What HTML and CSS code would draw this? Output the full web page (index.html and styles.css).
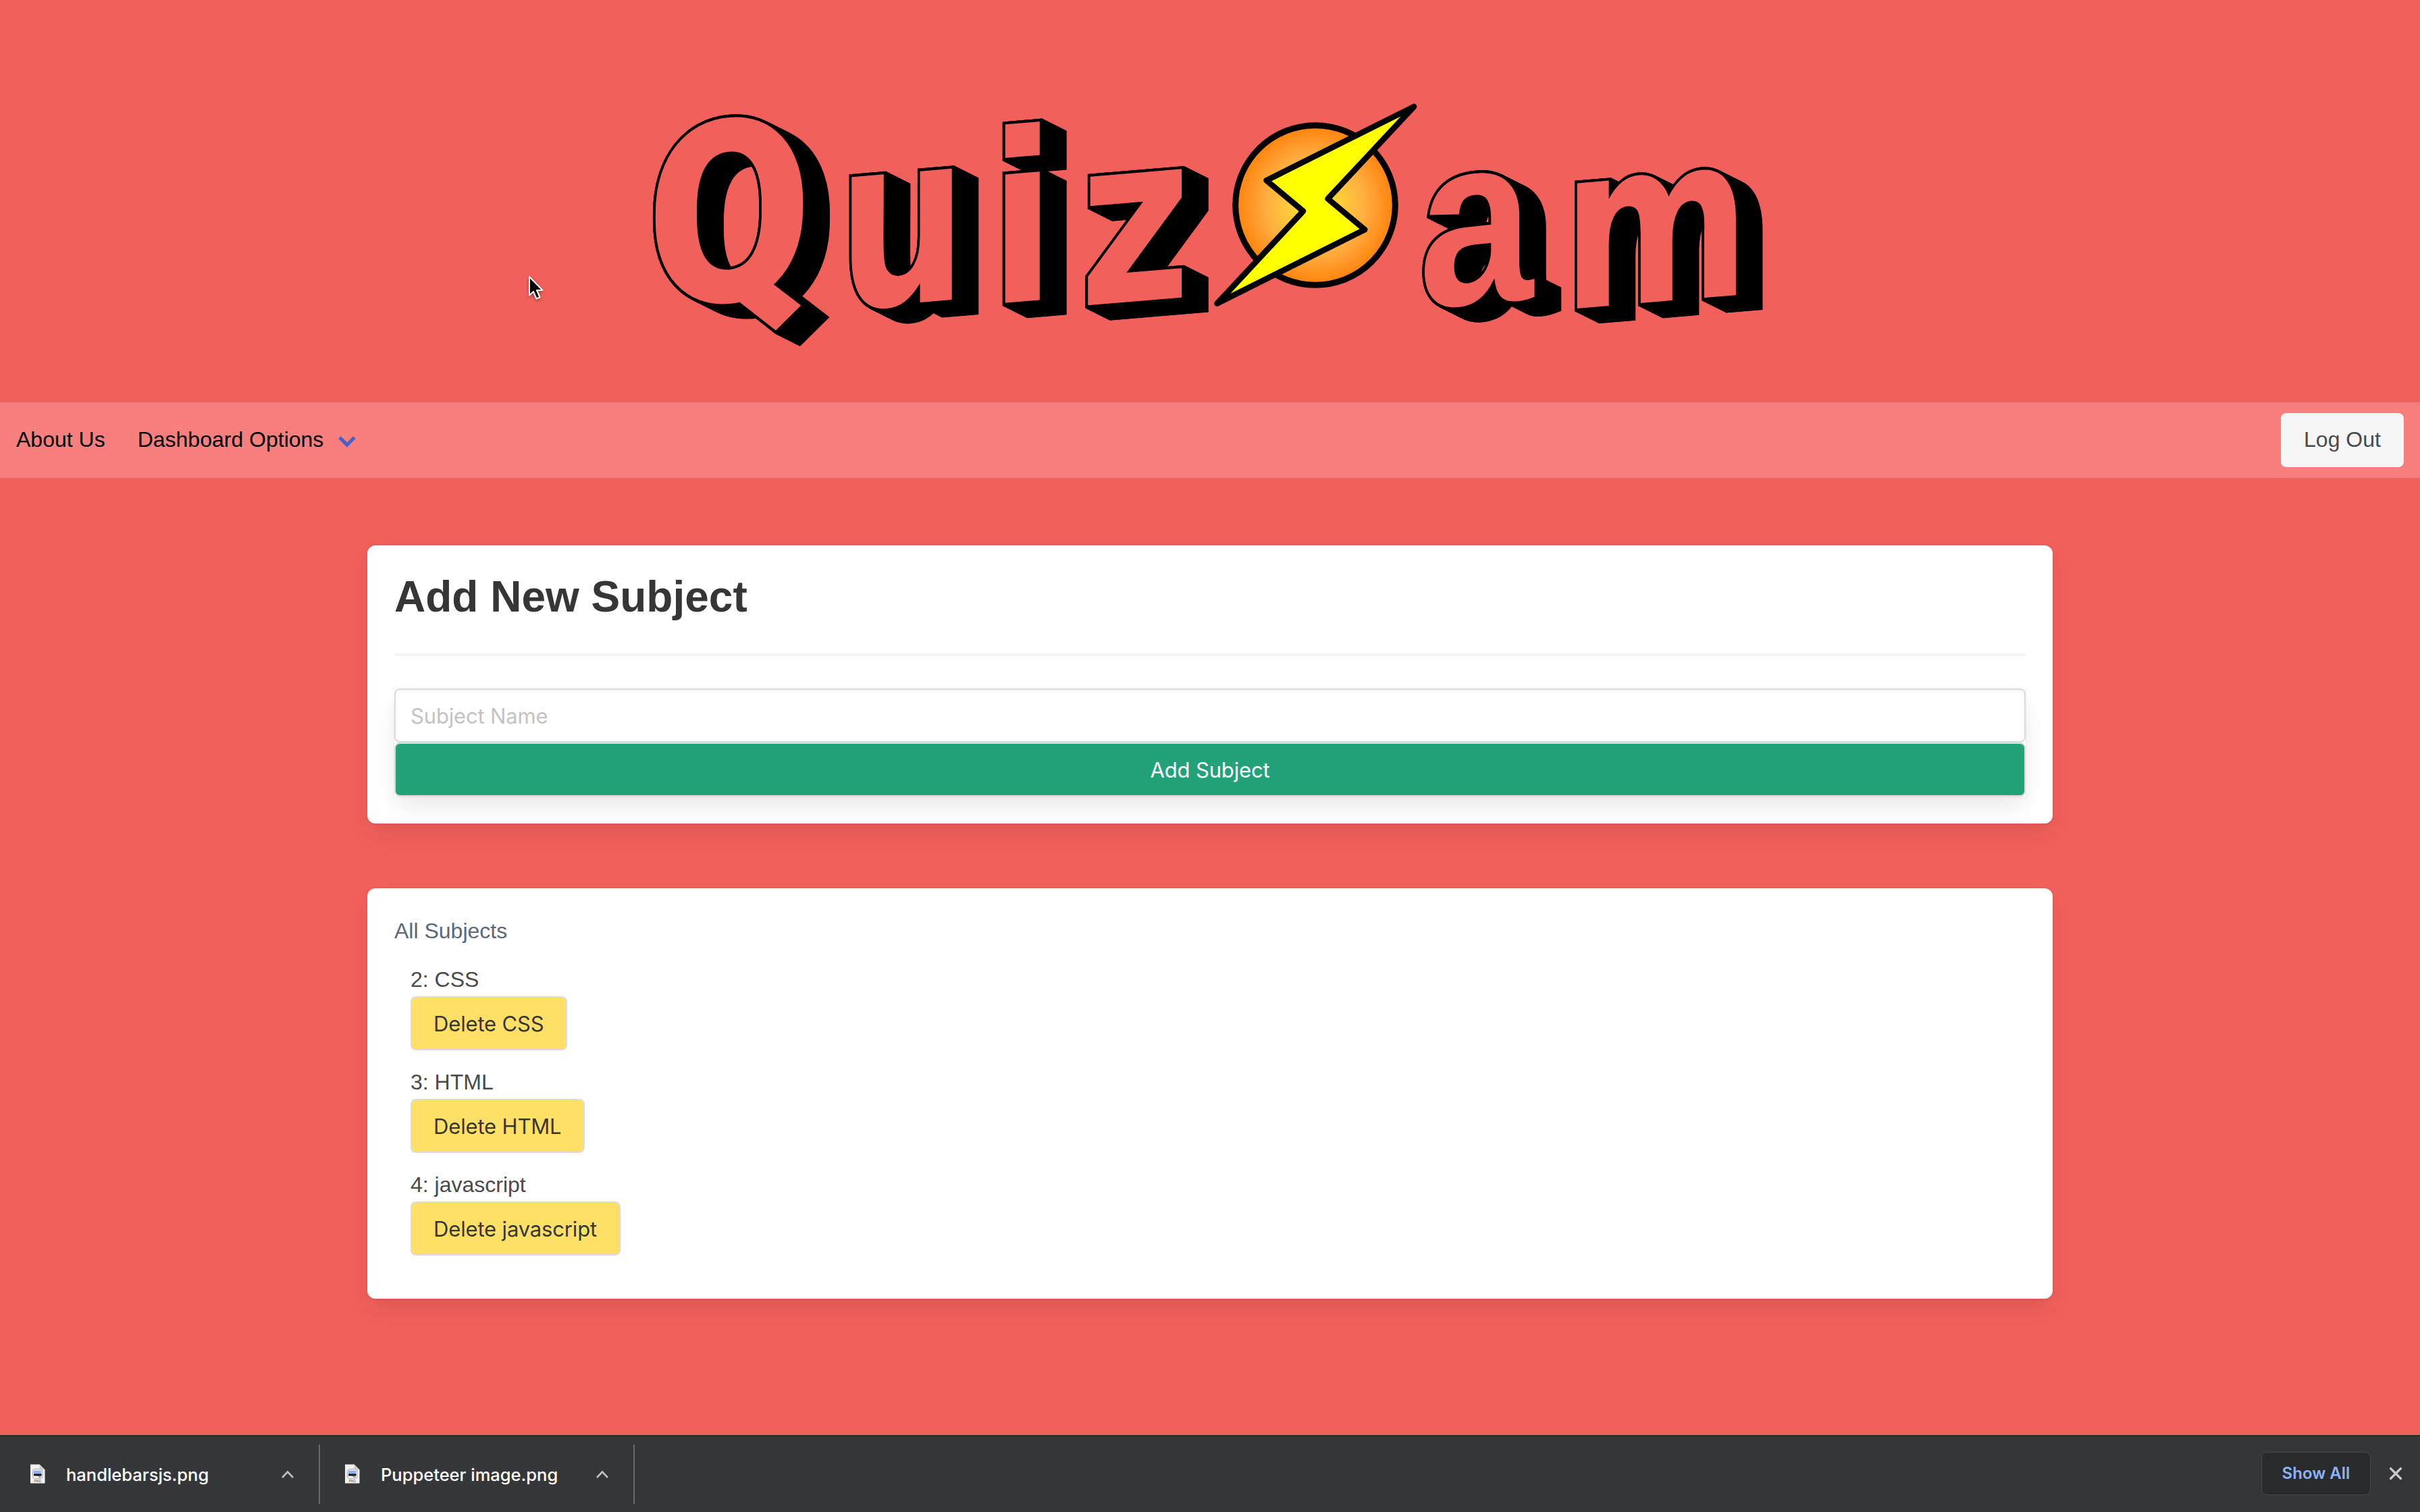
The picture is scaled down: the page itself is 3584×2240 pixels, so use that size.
FILE: index.html
```html
<!DOCTYPE html>
<html lang="en">
<head>
<meta charset="utf-8">
<title>Quizam</title>
<link rel="stylesheet" href="styles.css">
</head>
<body>
<header class="hero">
  <svg class="logo" viewBox="940 130 1700 400" role="img" aria-label="Quizam">
    <defs>
      <radialGradient id="sun">
        <stop offset="0" stop-color="#ffe92e"/>
        <stop offset="0.25" stop-color="#ffd437"/>
        <stop offset="0.6" stop-color="#ffb041"/>
        <stop offset="0.78" stop-color="#ff9a2b"/>
        <stop offset="1" stop-color="#ff820b"/>
      </radialGradient>
      <g id="word" class="word">
        <text class="rob" transform="translate(958.500 456.500) skewY(-4.8) scale(3.51 3.78)">Q</text>
        <text transform="translate(1240.2 458.2) skewY(-4.8) scale(3 3.55)">u</text>
        <text transform="translate(1464.1 450.8) skewY(-4.8) scale(3.25 3.48)">i</text>
        <text transform="translate(1598.500 453.4) skewY(-4.8) scale(3.15 3.48)">z</text>
        <text class="lib" transform="translate(2101 456.500) skewY(-4.8) scale(3.05 3.58)">a</text>
        <text transform="translate(2313.500 458.8) skewY(-4.8) scale(2.97 3.39)">m</text>
      </g>
      <g id="d1"><use href="#word"/><use href="#word" x="0.571" y="0.286"/></g>
      <g id="d2"><use href="#d1"/><use href="#d1" x="1.143" y="0.571"/></g>
      <g id="d3"><use href="#d2"/><use href="#d2" x="2.286" y="1.143"/></g>
      <g id="d4"><use href="#d3"/><use href="#d3" x="4.571" y="2.286"/></g>
      <g id="d5"><use href="#d4"/><use href="#d4" x="9.143" y="4.571"/></g>
      <g id="d6"><use href="#d5"/><use href="#d5" x="18.286" y="9.143"/></g>
    </defs>
    <use href="#d6" fill="#000"/>
    <use href="#word" fill="#f2605b"/>
    <circle cx="1948" cy="304" r="118.3" fill="url(#sun)" stroke="#000" stroke-width="9"/>
    <path d="M2094 158L1875.500 267.300L1930 312.700L1802.500 449.700L2021.300 340.200L1966.500 294.500Z" fill="#ff0" stroke="#000" stroke-width="8.600" stroke-linejoin="round"/>
  </svg>
</header>
<nav class="navbar">
  <a class="nav-item">About Us</a>
  <a class="nav-item">Dashboard Options
    <svg class="chevron" viewBox="0 0 28 20"><path d="M3 4L14 15L25 4" fill="none" stroke="#485fc7" stroke-width="5.200"/></svg>
  </a>
  <button class="btn logout">Log Out</button>
</nav>
<main class="container">
  <section class="box">
    <h1 class="title">Add New Subject</h1>
    <hr class="rule">
    <form class="form">
      <input class="input" type="text" placeholder="Subject Name">
      <button class="btn submit" type="button">Add Subject</button>
    </form>
  </section>
  <section class="box">
    <p class="label">All Subjects</p>
    <ul class="subjects">
      <li class="subject"><span class="subject-name">2: CSS</span><button class="btn delete">Delete CSS</button></li>
      <li class="subject"><span class="subject-name">3: HTML</span><button class="btn delete">Delete HTML</button></li>
      <li class="subject"><span class="subject-name">4: javascript</span><button class="btn delete">Delete javascript</button></li>
    </ul>
  </section>
</main>
<footer class="shelf">
  <div class="download">
    <svg class="file" viewBox="0 0 23 29"><path d="M1 0.500H14.500L22.500 8.500V28.500H1Z" fill="#f1f1f1"/><path d="M14.500 0.500V8.500H22.500Z" fill="#cfcfcf"/><rect x="4.500" y="7.500" width="14.500" height="14" rx="3.500" fill="#fafafa" stroke="#a9a9a9"/><rect x="6" y="9.500" width="11.500" height="6" fill="#8fb4ec"/><path d="M6 14.500H17.500V17.500H6Z" fill="#10131c"/><path d="M12 16.500l2.500 3 2-1" stroke="#333" fill="none"/><text x="11.800" y="26.800" class="ext">PNG</text></svg>
    <span class="name">handlebarsjs.png</span>
    <svg class="caret" viewBox="0 0 20 14"><path d="M2 12L10 3.500L18 12" fill="none" stroke="#bdbdbf" stroke-width="2.600"/></svg>
  </div>
  <div class="download second">
    <svg class="file" viewBox="0 0 23 29"><path d="M1 0.500H14.500L22.500 8.500V28.500H1Z" fill="#f1f1f1"/><path d="M14.500 0.500V8.500H22.500Z" fill="#cfcfcf"/><rect x="4.500" y="7.500" width="14.500" height="14" rx="3.500" fill="#fafafa" stroke="#a9a9a9"/><rect x="6" y="9.500" width="11.500" height="6" fill="#8fb4ec"/><path d="M6 14.500H17.500V17.500H6Z" fill="#10131c"/><path d="M12 16.500l2.500 3 2-1" stroke="#333" fill="none"/><text x="11.800" y="26.800" class="ext">PNG</text></svg>
    <span class="name">Puppeteer image.png</span>
    <svg class="caret" viewBox="0 0 20 14"><path d="M2 12L10 3.500L18 12" fill="none" stroke="#bdbdbf" stroke-width="2.600"/></svg>
  </div>
  <button class="show-all">Show All</button>
  <svg class="close" viewBox="0 0 20 20"><path d="M2.500 2.500L17.500 17.500M17.500 2.500L2.500 17.500" stroke="#c9c9ca" stroke-width="3.200" stroke-linecap="round"/></svg>
</footer>
<svg class="cursor" viewBox="0 0 24 38"><path d="M2 2V29.500L8 24L12.500 34.500L17.500 32.500L13 22H21.500Z" fill="#000" stroke="#fff" stroke-width="2" stroke-linejoin="round"/></svg>
</body>
</html>
```
FILE: styles.css
```css
* { box-sizing: border-box; }
html, body { margin: 0; padding: 0; }
body {
  width: 3584px;
  height: 2240px;
  overflow: hidden;
  display: flex;
  flex-direction: column;
  position: relative;
  background: #f2605b;
  color: #4a4a4a;
  font: 32px/48px "Liberation Sans", Arial, sans-serif;
}
.hero { height: 596px; padding-top: 130px; }
.logo { display: block; width: 1700px; height: 400px; margin-left: 940px; overflow: visible; }
.word { font: 700 100px "DejaVu Sans Condensed", "DejaVu Sans", sans-serif; font-stretch: condensed; stroke: #000; stroke-width: 2.4px; paint-order: stroke; }
.word .rob { font: 900 100px Roboto, sans-serif; stroke-width: 2.2px; }
.word .lib { font: 700 100px "Liberation Sans", sans-serif; }
.navbar { height: 112px; display: flex; align-items: center; background: #f7807f; padding-right: 24px; }
.nav-item { display: flex; align-items: center; padding: 0 24px 2px; color: #000; }
.chevron { width: 28px; height: 20px; margin-left: 21px; margin-top: 6px; }
.btn {
  height: 80px;
  border: 2px solid #dbdbdb;
  border-radius: 8px;
  font: 31px/48px Inter, sans-serif;
  letter-spacing: -0.16px;
  padding: 1px 0 0;
}
.logout { margin-left: auto; width: 182px; padding: 0 0 2px; border-color: #f5f5f5; background: #f5f5f5; color: #4a4a4a; font: 32px/48px "Liberation Sans", sans-serif; letter-spacing: 0; }
.container { width: 2496px; margin: 100px auto 0; display: flex; flex-direction: column; gap: 96px; }
.box { background: #fff; border-radius: 12px; padding: 40px; box-shadow: 0 16px 32px -4px rgba(10,10,10,.1), 0 0 0 2px rgba(10,10,10,.02); }
.title { margin: 0; font-size: 64px; line-height: 72px; font-weight: 700; color: #363636; }
.rule { margin: 48px 0; border: 0; height: 4px; background: #f5f5f5; }
.form { display: flex; flex-direction: column; box-shadow: 0 16px 32px -4px rgba(10,10,10,.1), 0 0 0 2px rgba(10,10,10,.02); }
.input { width: 100%; height: 80px; border: 2px solid #dbdbdb; border-radius: 8px; padding: 0 22px; font: 31px/48px Inter, sans-serif; letter-spacing: -0.16px; box-shadow: inset 0 2px 4px rgba(10,10,10,.05); }
.input::placeholder { color: #c3c3c3; opacity: 1; }
.submit { background: #23a27a; color: #fff; }
.label { margin: 0; line-height: 46px; padding-bottom: 2px; color: #5c677b; }
.subjects { list-style: none; margin: 0; padding: 0 0 24px 24px; }
.subject { display: flex; flex-direction: column; align-items: flex-start; padding-top: 24px; }
.subject-name { line-height: 46px; padding-bottom: 2px; }
.delete { background: #ffe066; color: #363636; padding: 1px 33px 0 32px; }
.shelf { height: 114px; margin-top: auto; display: flex; align-items: center; background: #35363a; border-top: 2px solid #292a2d; font: 500 25.500px/32px Inter, sans-serif; color: #fff; }
.download { width: 474px; height: 88px; display: flex; align-items: center; border-right: 2px solid #68696c; padding: 0 36px 0 44px; }
.second { width: 466px; padding-left: 36px; }
.file { width: 23px; height: 29px; margin-right: 31px; margin-bottom: 2px; }
.name { padding-top: 1px; }
.ext { font: 700 5px "Liberation Sans", sans-serif; fill: #888; text-anchor: middle; }
.caret { width: 20px; height: 14px; margin-left: auto; }
.show-all { margin-left: auto; width: 162px; height: 64px; margin-bottom: 3px; border: 1px solid #47484c; border-radius: 8px; background: #292a2d; color: #8ab4f8; font: 600 24px/32px Inter, sans-serif; padding: 0; }
.close { width: 20px; height: 20px; margin: 0 26px 3px 27px; }
.cursor { position: absolute; left: 782px; top: 408px; width: 24px; height: 38px; filter: drop-shadow(0 2px 2px rgba(0,0,0,.35)); }
```
